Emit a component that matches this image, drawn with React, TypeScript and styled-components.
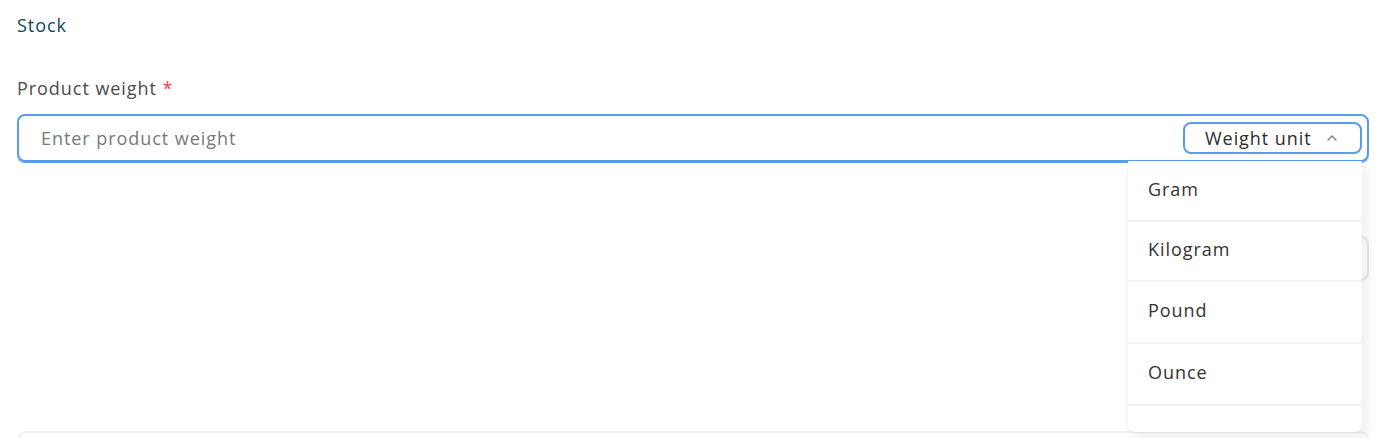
import React, { useState } from 'react';
import styled, { createGlobalStyle } from 'styled-components';

const GlobalStyle = createGlobalStyle`
  body {
    margin: 0;
    background: #ffffff;
    font-family: 'Open Sans', 'Liberation Sans', sans-serif;
    letter-spacing: 0.95px;
  }
`;

const Page = styled.div`
  padding: 12px 9px 0 17px;
  height: 438px;
  box-sizing: border-box;
  overflow: hidden;
`;

const SectionTitle = styled.h2`
  margin: 0;
  font-size: 18px;
  font-weight: 500;
  color: #0b4a5a;
  line-height: 26px;
`;

const Field = styled.div`
  margin-top: 37px;
`;

const Label = styled.label`
  display: block;
  font-size: 18px;
  color: #4b4b4b;
  line-height: 26px;
  margin-bottom: 13px;

  span {
    color: #e5484d;
  }
`;

const InputWrap = styled.div`
  position: relative;
  display: flex;
  align-items: center;
  height: 48px;
  box-sizing: border-box;
  border: 2px solid #5a9bf0;
  border-radius: 8px;
  box-shadow: 0 1px 0 #5a9bf0;
  padding: 0 5px 0 20px;
`;

const Input = styled.input`
  flex: 1;
  border: none;
  outline: none;
  font-family: inherit;
  letter-spacing: inherit;
  font-size: 18px;
  color: #333;
  background: transparent;

  &::placeholder {
    color: #787878;
  }
`;

const UnitButton = styled.button`
  display: flex;
  align-items: center;
  gap: 14px;
  width: 179px;
  height: 32px;
  box-sizing: border-box;
  padding: 0 20px;
  border: 2px solid #5a9bf0;
  border-radius: 8px;
  background: #fff;
  font-family: inherit;
  letter-spacing: inherit;
  font-size: 18px;
  color: #2c2c2c;
  cursor: pointer;
`;

const Menu = styled.ul`
  position: absolute;
  top: 45px;
  right: 5px;
  width: 234px;
  height: 271px;
  margin: 0;
  padding: 0;
  list-style: none;
  background: #fff;
  border-radius: 0 0 8px 8px;
  box-shadow: 4px 6px 14px rgba(0, 0, 0, 0.08), -1px 0 2px rgba(0, 0, 0, 0.04);
  overflow: hidden;
  z-index: 2;
`;

const MenuItem = styled.li<{ $h: number }>`
  height: ${(p) => p.$h}px;
  box-sizing: border-box;
  display: flex;
  align-items: center;
  padding: 0 20px 4px;
  font-size: 18px;
  color: #333;
  border-bottom: 2px solid #f1f1f1;
  cursor: pointer;
`;

const BehindRow = styled.div`
  display: flex;
  justify-content: flex-end;
  margin-top: 74px;
`;

const BehindBox = styled.div`
  width: 200px;
  height: 45px;
  box-sizing: border-box;
  border: 2px solid #e6e6e6;
  border-radius: 8px;
`;

const Card = styled.div`
  margin-top: 150px;
  margin-left: 1px;
  height: 40px;
  border: 2px solid #f0f0f0;
  border-radius: 8px;
`;

const units = ['Gram', 'Kilogram', 'Pound', 'Ounce', ''];
const heights = [61, 60, 62, 62, 40];

const Chevron = () => (
  <svg width="12" height="12" viewBox="0 0 12 12" fill="none">
    <path d="M2 8 L6 4 L10 8" stroke="#777" strokeWidth="1.2" strokeLinecap="round" strokeLinejoin="round" />
  </svg>
);

export default function App() {
  const [open, setOpen] = useState(true);

  return (
    <Page>
      <GlobalStyle />
      <SectionTitle>Stock</SectionTitle>
      <Field>
        <Label>
          Product weight <span>*</span>
        </Label>
        <InputWrap>
          <Input placeholder="Enter product weight" />
          <UnitButton onClick={() => setOpen(!open)}>
            Weight unit
            <Chevron />
          </UnitButton>
          {open && (
            <Menu>
              {units.map((u, i) => (
                <MenuItem key={i} $h={heights[i]}>
                  {u}
                </MenuItem>
              ))}
            </Menu>
          )}
        </InputWrap>
      </Field>
      <BehindRow>
        <BehindBox />
      </BehindRow>
      <Card />
    </Page>
  );
}
